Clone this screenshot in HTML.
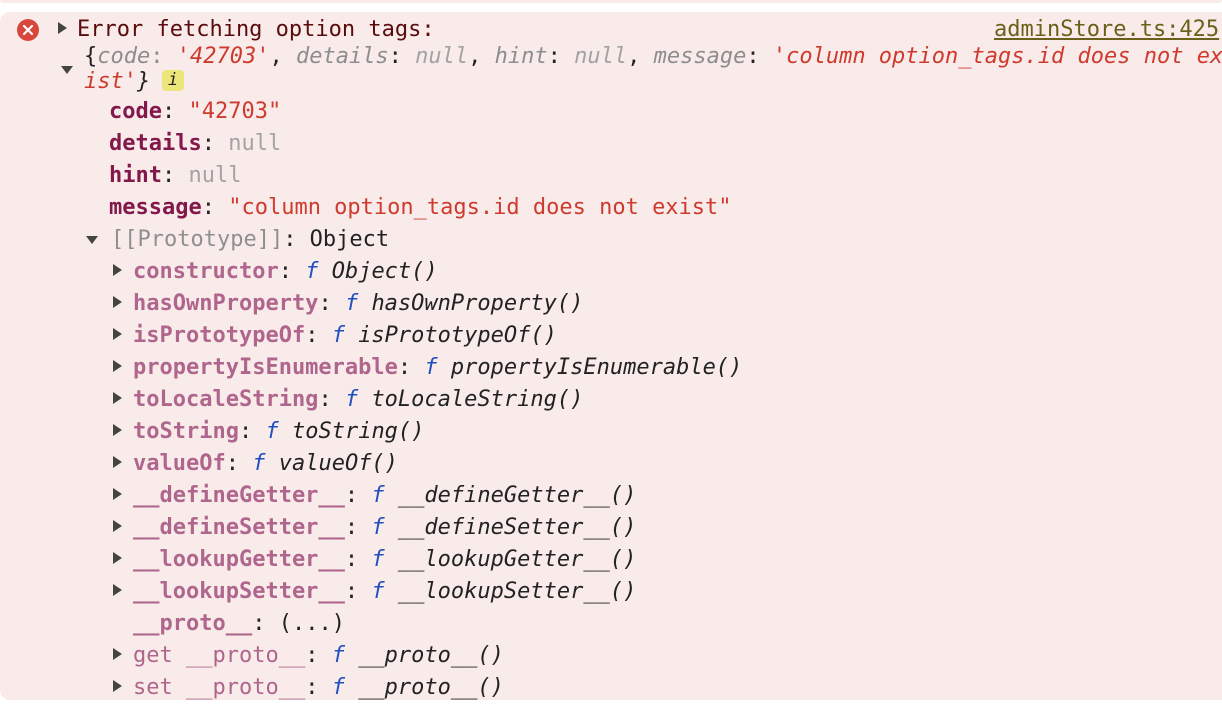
<!DOCTYPE html>
<html><head><meta charset="utf-8"><style>
body{margin:0;width:1222px;height:702px;background:#fff;overflow:hidden;position:relative;font-family:"DejaVu Sans Mono","Liberation Mono",monospace;font-size:22px}
.top{position:absolute;left:0;top:0;width:1222px;height:3px;background:#f9ebea;border-radius:0 0 6px 6px}
.box{position:absolute;left:0;top:12px;width:1240px;height:688px;background:#f9ebea;border-radius:10px}
.w{position:absolute;left:0;top:2px;width:1222px;height:700px}
.l{position:absolute;white-space:pre;line-height:32px;height:32px}
.k{color:#83184a;font-weight:bold}
.ik{color:#b0668c;font-weight:bold}
.ig{color:#b0668c}
.s{color:#cf3a2e}
.n{color:#a3a3a3}
.g{color:#8d8d8d;font-style:italic}
.f{color:#1f4fc0;font-style:italic}
.it{font-style:italic;color:#222}
.d{color:#222}
.tr{position:absolute;width:0;height:0;border-top:6px solid transparent;border-bottom:6px solid transparent;border-left:9px solid #454540}
.td{position:absolute;width:0;height:0;border-left:6px solid transparent;border-right:6px solid transparent;border-top:8px solid #454540}
</style></head><body>
<div class="top"></div>
<div class="box"></div>
<div class="w">
<svg style="position:absolute;left:17px;top:17px" width="22" height="22"><circle cx="11" cy="11" r="11" fill="#d9463a"/><path d="M7 7L15 15M15 7L7 15" stroke="#fff" stroke-width="2.2" stroke-linecap="round"/></svg>
<div class="tr" style="left:58px;top:20px"></div>
<div class="l" style="left:77px;top:12px;color:#5a0b0b">Error fetching option tags:</div>
<div class="l" style="left:994px;top:12px;color:#6b6019;text-decoration:underline">adminStore.ts:425</div>
<div class="l d" style="left:84px;top:39px">{<span class="g">code</span><span class="g" style="font-style:normal">: </span><span class="s" style="font-style:italic">'42703'</span>, <span class="g">details</span>: <span class="n" style="font-style:italic">null</span>, <span class="g">hint</span>: <span class="n" style="font-style:italic">null</span>, <span class="g">message</span>: <span class="s" style="font-style:italic">'column option_tags.id does not ex</span></div>
<div class="td" style="left:61px;top:64px"></div>
<div class="l d" style="left:84px;top:64px"><span class="s" style="font-style:italic">ist'</span><span class="it">}</span></div>
<div style="position:absolute;left:162px;top:68px;width:22px;height:21px;background:#ece67a;border-radius:4px;text-align:center;font-style:italic;font-size:17px;line-height:21px;color:#222">i</div>
<div class="l" style="left:109px;top:94px"><span class="k">code</span><span class="d">: </span><span class="s">"42703"</span></div>
<div class="l" style="left:109px;top:126px"><span class="k">details</span><span class="d">: </span><span class="n">null</span></div>
<div class="l" style="left:109px;top:158px"><span class="k">hint</span><span class="d">: </span><span class="n">null</span></div>
<div class="l" style="left:109px;top:190px"><span class="k">message</span><span class="d">: </span><span class="s">"column option_tags.id does not exist"</span></div>
<div class="td" style="left:86px;top:234px"></div>
<div class="l" style="left:111px;top:222px"><span class="n" style="color:#8f8f8f">[[Prototype]]</span><span class="d">: Object</span></div>

<div class="tr" style="left:113px;top:262px"></div><div class="l" style="left:133px;top:254px"><span class="ik">constructor</span><span class="d">: </span><span class="f">f</span> <span class="it">Object()</span></div>
<div class="tr" style="left:113px;top:294px"></div><div class="l" style="left:133px;top:286px"><span class="ik">hasOwnProperty</span><span class="d">: </span><span class="f">f</span> <span class="it">hasOwnProperty()</span></div>
<div class="tr" style="left:113px;top:326px"></div><div class="l" style="left:133px;top:318px"><span class="ik">isPrototypeOf</span><span class="d">: </span><span class="f">f</span> <span class="it">isPrototypeOf()</span></div>
<div class="tr" style="left:113px;top:358px"></div><div class="l" style="left:133px;top:350px"><span class="ik">propertyIsEnumerable</span><span class="d">: </span><span class="f">f</span> <span class="it">propertyIsEnumerable()</span></div>
<div class="tr" style="left:113px;top:390px"></div><div class="l" style="left:133px;top:382px"><span class="ik">toLocaleString</span><span class="d">: </span><span class="f">f</span> <span class="it">toLocaleString()</span></div>
<div class="tr" style="left:113px;top:422px"></div><div class="l" style="left:133px;top:414px"><span class="ik">toString</span><span class="d">: </span><span class="f">f</span> <span class="it">toString()</span></div>
<div class="tr" style="left:113px;top:454px"></div><div class="l" style="left:133px;top:446px"><span class="ik">valueOf</span><span class="d">: </span><span class="f">f</span> <span class="it">valueOf()</span></div>
<div class="tr" style="left:113px;top:486px"></div><div class="l" style="left:133px;top:478px"><span class="ik">__defineGetter__</span><span class="d">: </span><span class="f">f</span> <span class="it">__defineGetter__()</span></div>
<div class="tr" style="left:113px;top:518px"></div><div class="l" style="left:133px;top:510px"><span class="ik">__defineSetter__</span><span class="d">: </span><span class="f">f</span> <span class="it">__defineSetter__()</span></div>
<div class="tr" style="left:113px;top:550px"></div><div class="l" style="left:133px;top:542px"><span class="ik">__lookupGetter__</span><span class="d">: </span><span class="f">f</span> <span class="it">__lookupGetter__()</span></div>
<div class="tr" style="left:113px;top:582px"></div><div class="l" style="left:133px;top:574px"><span class="ik">__lookupSetter__</span><span class="d">: </span><span class="f">f</span> <span class="it">__lookupSetter__()</span></div>
<div class="l" style="left:133px;top:606px"><span class="ik">__proto__</span><span class="d">: (...)</span></div>
<div class="tr" style="left:113px;top:646px"></div><div class="l" style="left:133px;top:638px"><span class="ig">get __proto__</span><span class="d">: </span><span class="f">f</span> <span class="it">__proto__()</span></div>
<div class="tr" style="left:113px;top:678px"></div><div class="l" style="left:133px;top:670px"><span class="ig">set __proto__</span><span class="d">: </span><span class="f">f</span> <span class="it">__proto__()</span></div>
</div>
</body></html>
